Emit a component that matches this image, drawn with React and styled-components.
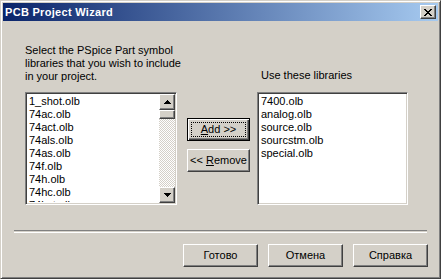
import React from "react";
import styled, { createGlobalStyle, css } from "styled-components";

const Global = createGlobalStyle`
  html, body { margin: 0; padding: 0; background: #d4d0c8; }
  body { font-family: "Liberation Sans", Arial, sans-serif; font-size: 11px; }
  #root { width: 441px; height: 279px; }
`;

const Frame = styled.div`
  box-sizing: border-box;
  width: 441px;
  height: 279px;
  background: #d4d0c8;
  border: 1px solid;
  border-color: #d4d0c8 #404040 #404040 #d4d0c8;
  box-shadow: inset 1px 1px #fff, inset -1px -1px #808080;
  padding: 2px;
  display: flex;
  flex-direction: column;
  color: #000;
`;

const TitleBar = styled.div`
  height: 18px;
  display: flex;
  align-items: center;
  justify-content: space-between;
  padding: 0 2px 0 2px;
  background: linear-gradient(to right, #0a246a, #a6caf0);
`;

const Title = styled.span`
  color: #fff;
  font-family: "Liberation Sans", Arial, sans-serif;
  font-weight: bold;
  font-size: 11px;
  letter-spacing: 0.3px;
`;

const raised = css`
  background: #d4d0c8;
  border: 1px solid;
  border-color: #fff #404040 #404040 #fff;
  box-shadow: inset -1px -1px #808080, inset 1px 1px #d4d0c8;
`;

const CloseBtn = styled.div`
  ${raised};
  box-sizing: border-box;
  width: 16px;
  height: 14px;
  display: flex;
  align-items: center;
  justify-content: center;
`;

const Body = styled.div`
  flex: 1;
  display: flex;
  flex-direction: column;
  padding: 23px 10px 0 11px;
`;

const Main = styled.div`
  display: flex;
  height: 161px;
  padding-left: 11px;
`;

const Column = styled.div`
  display: flex;
  flex-direction: column;
  justify-content: flex-end;
  width: ${(p) => p.$w}px;
  margin-right: ${(p) => p.$mr || 0}px;
`;

const Label = styled.div`
  line-height: 13px;
  white-space: nowrap;
  margin-bottom: ${(p) => p.$mb}px;
  padding-left: ${(p) => p.$pl || 0}px;
`;

const List = styled.div`
  box-sizing: border-box;
  height: 113px;
  flex-shrink: 0;
  background: #fff;
  border: 1px solid;
  border-color: #808080 #fff #fff #808080;
  box-shadow: inset 1px 1px #404040, inset -1px -1px #d4d0c8;
  padding: 2px;
  display: flex;
  overflow: hidden;
`;

const Items = styled.div`
  flex: 1;
  overflow: hidden;
  padding: 0 0 0 1px;
`;

const Item = styled.div`
  height: 13px;
  line-height: 13px;
  white-space: nowrap;
`;

const ScrollBar = styled.div`
  width: 16px;
  margin: -1px -1px -1px 0;
  display: flex;
  flex-direction: column;
  background-color: #fff;
  background-image: conic-gradient(#d4d0c8 25%, #fff 0 50%, #d4d0c8 0 75%, #fff 0);
  background-size: 2px 2px;
`;

const ScrollBtn = styled.div`
  ${raised};
  box-sizing: border-box;
  width: 16px;
  height: ${(p) => p.$h || 16}px;
  display: flex;
  align-items: center;
  justify-content: center;
  flex-shrink: 0;
`;

const Track = styled.div`
  flex: 1;
`;

const Middle = styled.div`
  display: flex;
  flex-direction: column;
  padding-top: 74px;
  gap: 8px;
  width: 63px;
  margin-right: 7px;
`;

const Button = styled.div`
  ${raised};
  box-sizing: border-box;
  width: ${(p) => p.$w}px;
  height: 23px;
  display: flex;
  align-items: center;
  justify-content: center;
  line-height: 13px;
  position: relative;
  ${(p) =>
    p.$default &&
    css`
      border-color: #000;
      box-shadow: inset 1px 1px #fff, inset -1px -1px #404040,
        inset -2px -2px #808080;
    `}
`;

const Focus = styled.span`
  position: absolute;
  inset: 3px;
  border: 1px dotted #000;
`;

const U = styled.span`
  text-decoration: underline;
`;

const Separator = styled.div`
  margin-top: 25px;
  height: 1px;
  border-top: 1px solid #808080;
  border-bottom: 1px solid #fff;
  margin-right: 1px;
`;

const Footer = styled.div`
  display: flex;
  justify-content: flex-end;
  gap: 10px;
  margin-top: 11px;
`;

const Up = () => (
  <svg width="7" height="4" viewBox="0 0 7 4">
    <path d="M3 0h1v1h1v1h1v1h1v1H0V3h1V2h1V1h1z" fill="#000" />
  </svg>
);
const Down = () => (
  <svg width="7" height="4" viewBox="0 0 7 4">
    <path d="M0 0h7v1H6v1H5v1H4v1H3V3H2V2H1V1H0z" fill="#000" />
  </svg>
);

const left = [
  "1_shot.olb",
  "74ac.olb",
  "74act.olb",
  "74als.olb",
  "74as.olb",
  "74f.olb",
  "74h.olb",
  "74hc.olb",
  "74hct.olb",
];
const right = ["7400.olb", "analog.olb", "source.olb", "sourcstm.olb", "special.olb"];

export default function App() {
  return (
    <>
      <Global />
      <Frame>
        <TitleBar>
          <Title>PCB Project Wizard</Title>
          <CloseBtn>
            <svg width="8" height="7" viewBox="0 0 8 7">
              <path d="M0 0h2v1h1v1h2V1h1V0h2v1H7v1H6v1H5v1h1v1h1v1h1v1H6V6H5V5H3v1H2v1H0V6h1V5h1V4h1V3H2V2H1V1H0z" fill="#000" />
            </svg>
          </CloseBtn>
        </TitleBar>
        <Body>
          <Main>
            <Column $w={152} $mr={10}>
              <Label $mb={9}>
                Select the PSpice Part symbol
                <br />
                libraries that you wish to include
                <br />
                in your project.
              </Label>
              <List>
                <Items>
                  {left.map((t) => (
                    <Item key={t}>{t}</Item>
                  ))}
                </Items>
                <ScrollBar>
                  <ScrollBtn>
                    <Up />
                  </ScrollBtn>
                  <ScrollBtn $h={9} />
                  <Track />
                  <ScrollBtn>
                    <Down />
                  </ScrollBtn>
                </ScrollBar>
              </List>
            </Column>
            <Middle>
              <Button $w={63} $default>
                <Focus />
                <span>
                  <U>A</U>dd &gt;&gt;
                </span>
              </Button>
              <Button $w={63}>
                <span>
                  &lt;&lt; <U>R</U>emove
                </span>
              </Button>
            </Middle>
            <Column $w={151}>
              <Label $mb={10} $pl={4}>
                Use these libraries
              </Label>
              <List>
                <Items>
                  {right.map((t) => (
                    <Item key={t}>{t}</Item>
                  ))}
                </Items>
              </List>
            </Column>
          </Main>
          <Separator />
          <Footer>
            <Button $w={75}>Готово</Button>
            <Button $w={75}>Отмена</Button>
            <Button $w={75}>Справка</Button>
          </Footer>
        </Body>
      </Frame>
    </>
  );
}
